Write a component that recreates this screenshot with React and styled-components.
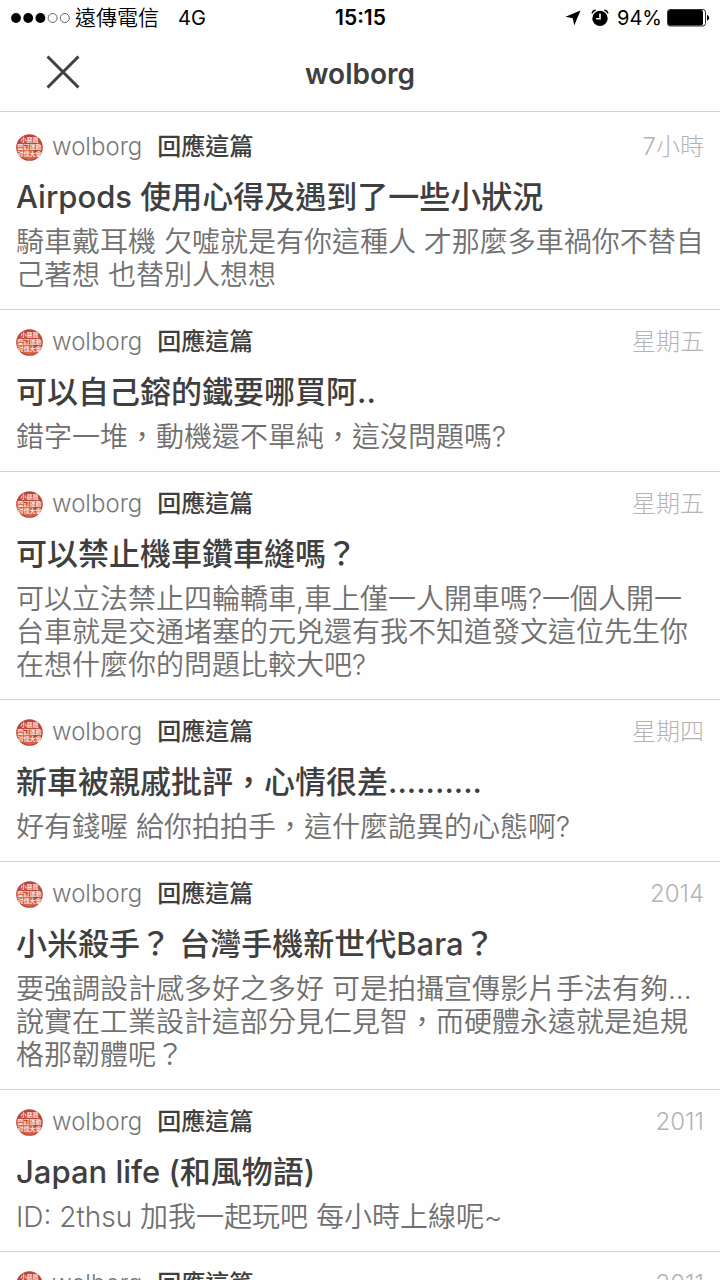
import React from 'react'
import styled, { createGlobalStyle } from 'styled-components'

const GlobalStyle = createGlobalStyle`
  * {
    box-sizing: border-box;
  }

  body {
    margin: 0;
    background: #fefefe;
    color: #3f3f3f;
    font-family: Inter, 'Noto Sans CJK TC', sans-serif;
  }

  #root {
    height: 100vh;
    overflow: hidden;
  }
`

const StatusBar = styled.div`
  display: grid;
  grid-template-columns: 1fr auto 1fr;
  align-items: center;
  height: 36px;
  padding: 0 10px 0 11px;
  color: #000;
  font-size: 20px;
  line-height: 36px;
`

const StatusGroup = styled.div`
  display: flex;
  align-items: center;
  justify-content: ${({ $end }) => ($end ? 'flex-end' : 'flex-start')};
`

const Signal = styled.svg`
  width: 59px;
  height: 12px;
`

const Carrier = styled.span`
  margin: 0 19px 0 5px;
  font-size: 21px;
  font-weight: 350;
`

const Time = styled.time`
  font-size: 21px;
  font-weight: 600;
`

const AlarmIcon = styled.svg`
  width: 18px;
  height: 18px;
  margin: 0 8px 0 10px;
`

const Percent = styled.span`
  margin-right: 5px;
`

const Header = styled.header`
  display: grid;
  grid-template-columns: 1fr auto 1fr;
  align-items: center;
  height: 76px;
  padding: 0 16px;
  border-bottom: 1px solid #d4d4d4;
`

const CloseButton = styled.button`
  display: flex;
  justify-self: start;
  margin: 0 0 4px 30px;
  padding: 0;
  border: none;
  background: none;
  color: #3f3f3f;
`

const Title = styled.h1`
  margin: 0;
  font-size: 28px;
  line-height: 36px;
  font-weight: 600;
`

const List = styled.ul`
  margin: 0;
  padding: 3px 0 0;
  list-style: none;
`

const Item = styled.li`
  padding: 16px 16px 17px;
  border-bottom: 1px solid #d4d4d4;
`

const Meta = styled.div`
  display: flex;
  align-items: center;
  height: 32px;
  font-size: 24px;
  line-height: 32px;
`

const AvatarIcon = styled.svg`
  flex: none;
  width: 27px;
  height: 27px;
  margin-right: 9px;
`

const UserName = styled.span`
  margin-right: 15px;
  color: #777;
  font-weight: 350;
`

const Action = styled.span`
  font-weight: 500;
`

const Date = styled.time`
  margin-left: auto;
  color: #b4b4b4;
  font-weight: 300;
`

const Subject = styled.h2`
  margin: 14px 0 9px;
  font-size: 31px;
  line-height: 40px;
  font-weight: 500;
`

const Content = styled.p`
  margin: 0;
  color: #707070;
  font-size: 28px;
  font-weight: 350;
  line-height: 33px;
  white-space: pre-line;
`

const replies = [
  {
    date: '7小時',
    subject: 'Airpods 使用心得及遇到了一些小狀況',
    content: '騎車戴耳機 欠噓就是有你這種人 才那麼多車禍你不替自\n己著想 也替別人想想'
  },
  {
    date: '星期五',
    subject: '可以自己鎔的鐵要哪買阿..',
    content: '錯字一堆，動機還不單純，這沒問題嗎?'
  },
  {
    date: '星期五',
    subject: '可以禁止機車鑽車縫嗎？',
    content: '可以立法禁止四輪轎車,車上僅一人開車嗎?一個人開一\n台車就是交通堵塞的元兇還有我不知道發文這位先生你\n在想什麼你的問題比較大吧?'
  },
  {
    date: '星期四',
    subject: '新車被親戚批評，心情很差..........',
    content: '好有錢喔 給你拍拍手，這什麼詭異的心態啊?'
  },
  {
    date: '2014',
    subject: '小米殺手？ 台灣手機新世代Bara？',
    content: '要強調設計感多好之多好 可是拍攝宣傳影片手法有夠...\n說實在工業設計這部分見仁見智，而硬體永遠就是追規\n格那韌體呢？'
  },
  {
    date: '2011',
    subject: 'Japan life (和風物語)',
    content: 'ID: 2thsu 加我一起玩吧 每小時上線呢~'
  },
  {
    date: '2011',
    subject: '',
    content: ''
  }
]

const Avatar = () => (
  <AvatarIcon viewBox="0 0 27 27" aria-hidden="true">
    <circle cx="13.5" cy="13.5" r="13.3" fill="#bd4439" />
    <path d="M.8 10a13.3 13.3 0 0 0 24.6 9q-5 1-10-3T.8 10z" fill="#d8634b" />
    <g fill="#fbe6df" fontSize="6" fontWeight="700" textAnchor="middle">
      <text x="13.5" y="8">小惡魔</text>
      <text x="13.5" y="15">空訂運動</text>
      <text x="13.5" y="22">討伐大會</text>
    </g>
  </AvatarIcon>
)

const Location = () => (
  <svg width="16" height="16" viewBox="0 0 16 16" aria-hidden="true">
    <path d="M15.5 .5 9.2 15.5 7.8 8.2.5 6.8z" />
  </svg>
)

const Alarm = () => (
  <AlarmIcon viewBox="0 0 18 18" aria-hidden="true">
    <circle cx="9" cy="9.4" r="7.7" />
    <path
      d="M1 4.4Q1.8 1.6 4.6 1M17 4.4Q16.2 1.6 13.4 1"
      fill="none"
      stroke="#000"
      strokeWidth="1.5"
    />
    <path d="M9 4.6v5.2H5.2" fill="none" stroke="#fff" strokeWidth="1.6" />
  </AlarmIcon>
)

const Battery = () => (
  <svg width="43" height="18" viewBox="0 0 43 18" aria-hidden="true">
    <rect x=".5" y=".5" width="38" height="16.5" rx="2.5" fill="#fff" stroke="#333" />
    <rect x="1" y="1" width="35" height="15.5" rx="2" />
    <path d="M40 5.8q2.2.8 2.2 3T40 11.8z" />
  </svg>
)

const App = () => (
  <>
    <GlobalStyle />
    <StatusBar>
      <StatusGroup>
        <Signal viewBox="0 0 59 12" aria-hidden="true">
          {[5, 17.2, 29.4].map(x => (
            <circle key={x} cx={x} cy="6" r="4.9" />
          ))}
          {[41.6, 53.8].map(x => (
            <circle key={x} cx={x} cy="6" r="4.5" fill="none" stroke="#555" strokeWidth=".9" />
          ))}
        </Signal>
        <Carrier>遠傳電信</Carrier>
        <span>4G</span>
      </StatusGroup>
      <Time>15:15</Time>
      <StatusGroup $end>
        <Location />
        <Alarm />
        <Percent>94%</Percent>
        <Battery />
      </StatusGroup>
    </StatusBar>
    <Header>
      <CloseButton type="button" aria-label="關閉">
        <svg width="34" height="34" viewBox="0 0 34 34">
          <path d="M1.5 1.5l31 31M32.5 1.5l-31 31" stroke="currentColor" strokeWidth="3" />
        </svg>
      </CloseButton>
      <Title>wolborg</Title>
    </Header>
    <List>
      {replies.map(({ date, subject, content }, i) => (
        <Item key={i}>
          <Meta>
            <Avatar />
            <UserName>wolborg</UserName>
            <Action>回應這篇</Action>
            <Date>{date}</Date>
          </Meta>
          <Subject>{subject}</Subject>
          <Content>{content}</Content>
        </Item>
      ))}
    </List>
  </>
)

export default App
